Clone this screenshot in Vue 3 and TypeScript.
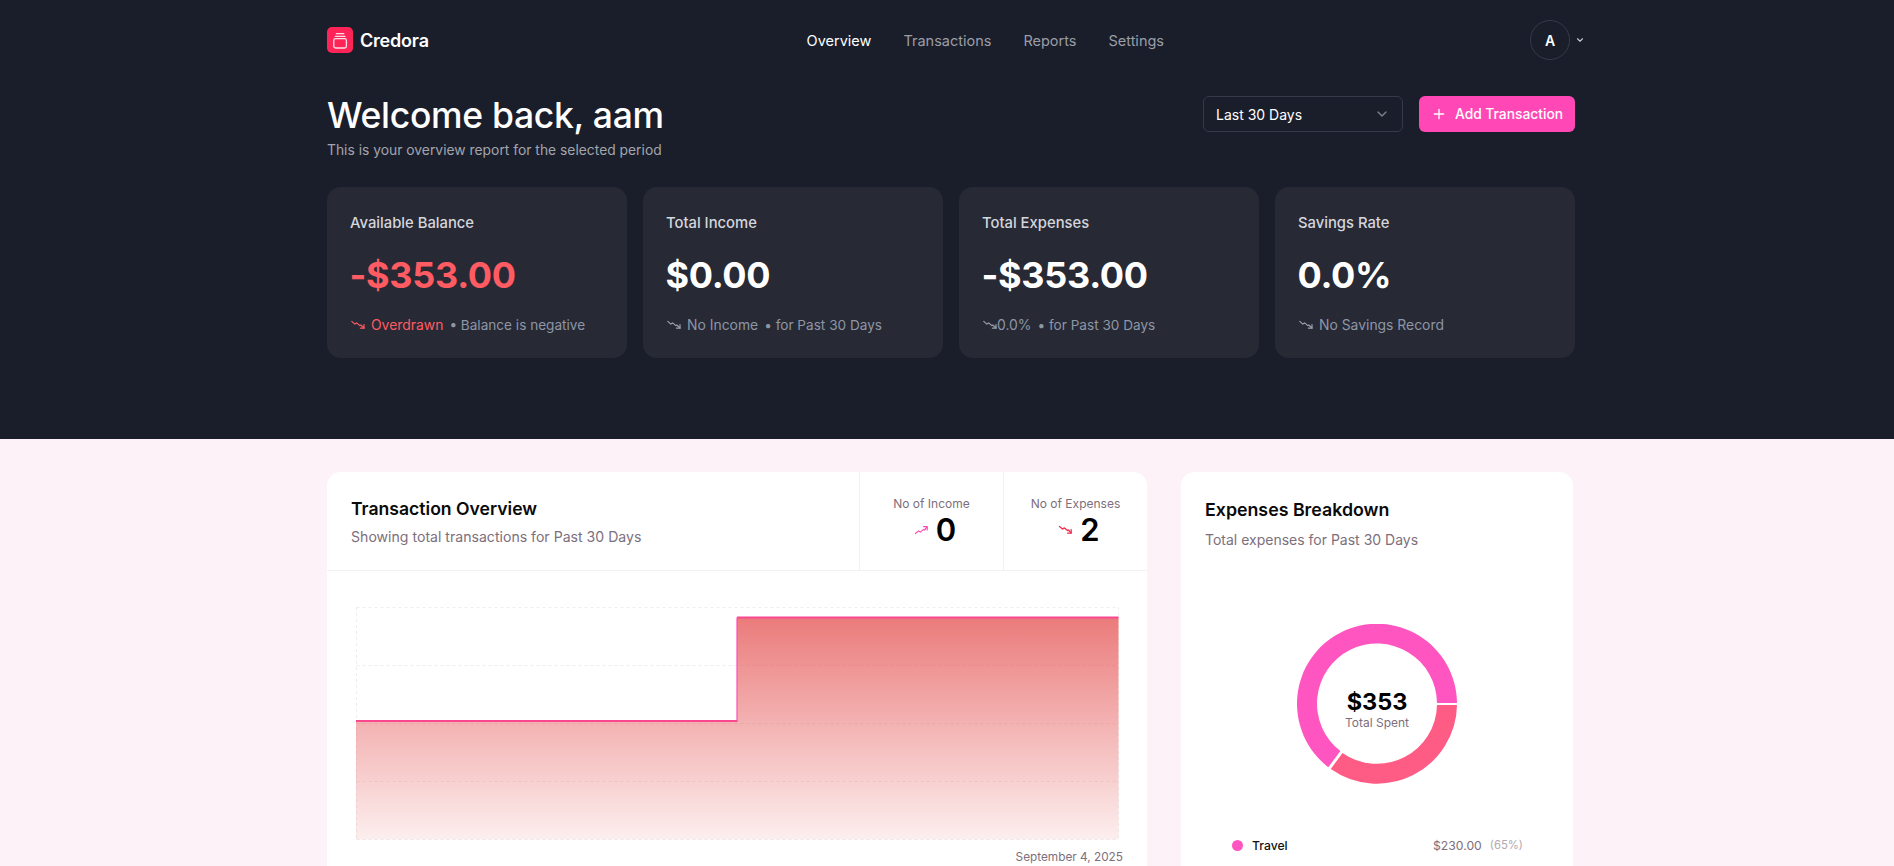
<script setup lang="ts">
interface Stat {
  label: string
  value: string
  danger?: boolean
  lead: string
  tail?: string
  tight?: boolean
}
const nav = ['Overview', 'Transactions', 'Reports', 'Settings']
const stats: Stat[] = [
  { label: 'Available Balance', value: '-$353.00', danger: true, lead: 'Overdrawn', tail: '• Balance is negative' },
  { label: 'Total Income', value: '$0.00', lead: 'No Income', tail: '• for Past 30 Days' },
  { label: 'Total Expenses', value: '-$353.00', lead: '0.0%', tail: '• for Past 30 Days', tight: true },
  { label: 'Savings Rate', value: '0.0%', lead: 'No Savings Record' }
]
const legend = [
  { name: 'Travel', amount: '$230.00', pct: '(65%)', color: '#ff55c0' },
  { name: 'General', amount: '$123.00', pct: '(35%)', color: '#ff5c85' }
]
</script>

<template>
  <div class="page">
    <section class="hero">
      <div class="wrap">
        <header class="topbar">
          <div class="brand">
            <span class="logo">
              <svg width="26" height="26" viewBox="0 0 26 26" fill="none" stroke="#ffffff" stroke-opacity="0.85" stroke-width="1.3" stroke-linecap="round" stroke-linejoin="round">
                <rect x="6.8" y="11.7" width="12.6" height="9.3" rx="1.8" />
                <path d="M9.4 6.7h7.4M8.2 9.3h9.8" />
              </svg>
            </span>
            <span class="brand-name">Credora</span>
          </div>
          <nav class="nav">
            <a v-for="(item, i) in nav" :key="item" :class="{ active: i === 0 }">{{ item }}</a>
          </nav>
          <div class="user">
            <span class="avatar">A</span>
            <svg width="10" height="10" viewBox="0 0 24 24" fill="none" stroke="#c7cbd3" stroke-width="2.6" stroke-linecap="round" stroke-linejoin="round"><path d="m6 9 6 6 6-6" /></svg>
          </div>
        </header>

        <div class="welcome">
          <div>
            <h1>Welcome back, aam</h1>
            <p>This is your overview report for the selected period</p>
          </div>
          <div class="actions">
            <div class="select">
              <span>Last 30 Days</span>
              <svg width="16" height="16" viewBox="0 0 24 24" fill="none" stroke="#7d828c" stroke-width="2" stroke-linecap="round" stroke-linejoin="round"><path d="m6 9 6 6 6-6" /></svg>
            </div>
            <button class="add" type="button">
              <svg width="16" height="16" viewBox="0 0 24 24" fill="none" stroke="#fff" stroke-width="2" stroke-linecap="round"><path d="M5 12h14M12 5v14" /></svg>
              <span>Add Transaction</span>
            </button>
          </div>
        </div>

        <div class="stats">
          <article v-for="s in stats" :key="s.label" class="stat">
            <h3>{{ s.label }}</h3>
            <div class="amount" :class="{ danger: s.danger }">{{ s.value }}</div>
            <div class="note" :class="{ tight: s.tight }">
              <svg class="trend" width="14" height="14" viewBox="0 0 14 14" fill="none" :stroke="s.danger ? '#ff5b63' : '#9aa1ad'" stroke-width="1.2" stroke-linecap="round" stroke-linejoin="round">
                <path d="M0.8 3.4l3 2.7 1.9-1.2 3.1 2.7 1-0.6 3.2 3" />
                <path d="M13 6.6v3.6H9.4" />
              </svg>
              <span :class="{ red: s.danger }">{{ s.lead }}</span>
              <span v-if="s.tail" class="tail">{{ s.tail }}</span>
            </div>
          </article>
        </div>
      </div>
    </section>

    <section class="lower">
      <div class="wrap grid">
        <article class="card overview">
          <header class="ov-head">
            <div class="ov-title">
              <h2>Transaction Overview</h2>
              <p>Showing total transactions for Past 30 Days</p>
            </div>
            <div class="counter">
              <span class="c-label">No of Income</span>
              <div class="c-val">
                <svg width="14" height="14" viewBox="0 0 14 14" fill="none" stroke="#ff4db8" stroke-width="1.2" stroke-linecap="round" stroke-linejoin="round"><path d="M1.5 10.5l3-2.6 1.9 1.2 3.1-2.7 1 0.6 2.5-3" /><path d="M9.6 3.6h3.6v3.4" /></svg>
                <strong>0</strong>
              </div>
            </div>
            <div class="counter">
              <span class="c-label">No of Expenses</span>
              <div class="c-val">
                <svg width="14" height="14" viewBox="0 0 14 14" fill="none" stroke="#f0304f" stroke-width="1.3" stroke-linecap="round" stroke-linejoin="round"><path d="M1.5 3.5l3 2.6 1.9-1.2 3.1 2.7 1-0.6 2.5 3" /><path d="M13.2 6.6v3.6H9.6" /></svg>
                <strong>2</strong>
              </div>
            </div>
          </header>
          <div class="chart-area">
            <svg class="chart" width="763" height="234" viewBox="0 0 763 234">
              <defs>
                <linearGradient id="fill" x1="0" y1="0" x2="0" y2="1">
                  <stop offset="0" stop-color="#e65a5a" stop-opacity="0.8" />
                  <stop offset="1" stop-color="#e65a5a" stop-opacity="0.1" />
                </linearGradient>
              </defs>
              <path d="M0.5 0.5H762.5M0.5 58.5H762.5M0.5 116.5H762.5M0.5 174.5H762.5M0.5 232.5H762.5M0.5 0V233M762.5 0V233" stroke="#eeeeee" stroke-width="1" stroke-dasharray="3 3" fill="none" />
              <path d="M0 114H381V10.5H762.5V232.5H0Z" fill="url(#fill)" />
              <path d="M0 114H381.5M381 10.5H762.5" fill="none" stroke="#f8488f" stroke-width="2" />
              <path d="M381 114V10.5" fill="none" stroke="#ff4db8" stroke-width="1.2" />
            </svg>
            <div class="date">September 4, 2025</div>
          </div>
        </article>

        <article class="card breakdown">
          <h2>Expenses Breakdown</h2>
          <p class="sub">Total expenses for Past 30 Days</p>
          <div class="donut">
            <svg width="160" height="160" viewBox="0 0 160 160">
              <path d="M160 79A80 80 0 1 0 31.3 143.2L43.4 127.1A60 60 0 1 1 140 79Z" fill="#ff55c0" />
              <path d="M160 81A80 80 0 0 1 33.8 145L45.5 128.9A60 60 0 0 0 140 81Z" fill="#ff5c85" />
            </svg>
            <div class="donut-label">
              <strong>$353</strong>
              <span>Total Spent</span>
            </div>
          </div>
          <ul class="legend">
            <li v-for="row in legend" :key="row.name">
              <i :style="{ background: row.color }"></i>
              <span class="l-name">{{ row.name }}</span>
              <span class="l-amt">{{ row.amount }}</span>
              <span class="l-pct">{{ row.pct }}</span>
            </li>
          </ul>
        </article>
      </div>
    </section>
  </div>
</template>

<style>
html, body { margin: 0; background: #fdf2f8; overflow: hidden; }
</style>

<style scoped>
.page { height: 866px; overflow: hidden; font-family: "Inter", "Noto Sans", sans-serif; }
.wrap { width: 1248px; margin-left: 327px; }
.hero { background: #1a1e2b; height: 439px; }
.topbar { height: 80px; display: flex; align-items: center; }
.brand { display: flex; align-items: center; gap: 7px; flex: 1; }
.logo { width: 26px; height: 26px; border-radius: 5px; background: #ff2457; display: flex; }
.brand-name { color: #fff; font-size: 18px; font-weight: 600; letter-spacing: -0.2px; }
.nav { display: flex; gap: 32px; font-size: 14.5px; color: #9a9da6; margin-right: 366px; }
.nav .active { color: #fff; }
.user { display: flex; align-items: center; gap: 5px; margin-right: -10px; }
.avatar { width: 40px; height: 40px; box-sizing: border-box; border: 1px solid #343a4a; border-radius: 50%; color: #fff; display: flex; align-items: center; justify-content: center; font-size: 14px; font-weight: 600; }
.welcome { display: flex; justify-content: space-between; align-items: flex-start; height: 91px; margin-top: 16px; }
h1 { margin: 0; color: #fff; font-size: 35.5px; line-height: 40px; font-weight: 500; letter-spacing: -0.3px; }
.welcome p { margin: 4px 0 0; font-size: 13.85px; color: #a2a4ab; line-height: 20px; }
.actions { display: flex; gap: 16px; }
.select { width: 200px; height: 36px; box-sizing: border-box; border: 1px solid #343a4a; border-radius: 6px; display: flex; align-items: center; justify-content: space-between; padding: 0 12px; color: #fff; font-size: 14px; }
.add { height: 36px; width: 156px; border: 0; border-radius: 6px; background: #ff48b5; color: #fff; display: flex; align-items: center; justify-content: center; gap: 8px; font: 500 13.8px "Inter", sans-serif; padding: 0; }
.stats { display: grid; grid-template-columns: repeat(4, 1fr); gap: 16px; }
.stat { height: 171px; box-sizing: border-box; background: #272935; border-radius: 14px; padding: 26px 24px; }
.stat h3 { margin: 0 0 0 -1px; color: #d4d6dc; font-size: 14.8px; line-height: 20px; font-weight: 500; }
.amount { margin: 20px 0 0 -1.5px; color: #fff; font-size: 36px; line-height: 44px; font-weight: 700; letter-spacing: -0.3px; }
.amount.danger { color: #ff5b63; }
.note { margin-top: 18px; display: flex; align-items: center; gap: 6px; font-size: 13.9px; line-height: 20px; color: #8d96a5; }
.note.tight { gap: 0; }
.note .tail { font-size: 13.6px; }
.note.tight .tail { margin-left: 6px; }
.red { color: #ff5b63; }
.lower { padding-top: 33px; }
.grid { display: grid; grid-template-columns: 820px 392px; gap: 34px; }
.card { background: #fff; border-radius: 14px; height: 500px; }
.ov-head { display: flex; height: 99px; box-sizing: border-box; border-bottom: 1px solid #f2f0f2; }
.ov-title { flex: 1; padding: 25px 24px; box-sizing: border-box; }
.ov-title h2, .breakdown h2 { margin: 0; color: #0a0a0a; font-size: 17.8px; line-height: 24px; font-weight: 600; }
.ov-title h2 { font-size: 17.6px; }
.ov-title p, .sub { margin: 6px 0 0; font-size: 14px; line-height: 20px; color: #7d6f7c; }
.ov-title p { font-size: 14.1px; }
.counter { width: 144px; box-sizing: border-box; border-left: 1px solid #f2f0f2; text-align: center; padding-top: 24px; }
.c-label { font-size: 12px; line-height: 16px; color: #7d6f7c; display: block; }
.c-val { display: flex; align-items: center; justify-content: center; gap: 8px; margin-top: 2px; padding-left: 7px; }
.c-val strong { font-size: 31px; line-height: 32px; font-weight: 600; color: #000; }
.chart-area { padding: 36px 0 0 29px; }
.chart { display: block; }
.date { width: 767px; text-align: right; margin-top: 8px; font-size: 11.8px; line-height: 16px; color: #7d6f7c; }
.breakdown { padding: 26px 24px; box-sizing: border-box; }
.sub { margin-top: 8px; }
.donut { position: relative; width: 160px; height: 160px; margin: 74px auto 0; }
.donut svg { display: block; }
.donut-label { position: absolute; inset: 0; padding-top: 10px; box-sizing: border-box; display: flex; flex-direction: column; align-items: center; justify-content: center; }
.donut-label strong { font-size: 23.5px; line-height: 28px; font-weight: 700; color: #000; }
.donut-label span { font-size: 12px; line-height: 14px; color: #7d6f7c; }
.legend { list-style: none; margin: 47px 0 0; padding: 0 26px 0 27px; }
.legend li { display: flex; align-items: center; height: 28px; font-size: 12.2px; }
.legend i { width: 11px; height: 11px; border-radius: 50%; margin-right: 9px; }
.l-name { flex: 1; color: #111; font-weight: 500; }
.l-amt { color: #7d6f7c; }
.l-pct { color: #b3a8b2; margin-left: 8px; font-size: 11.3px; }
</style>
